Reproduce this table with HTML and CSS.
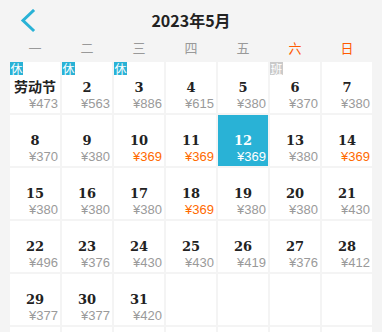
FILE: index.html
```html
<!DOCTYPE html>
<html lang="zh-CN">
<head>
<meta charset="utf-8">
<title>2023年5月</title>
<link rel="stylesheet" href="styles.css">
</head>
<body>
<div class="page">
  <header class="header">
    <div class="back">
      <svg width="16" height="24" viewBox="0 0 16 24"><polyline points="13,2 3,11.5 13,21" fill="none" stroke="#29b2d6" stroke-width="3" stroke-linecap="square"/></svg>
    </div>
    <div class="title">2023年5月</div>
    <div></div>
  </header>
  <div class="weekdays">
    <span>一</span><span>二</span><span>三</span><span>四</span><span>五</span><span class="we">六</span><span class="we">日</span>
  </div>
  <div class="grid">
    <div class="cell"><span class="badge rest">休</span><span class="num holiday">劳动节</span><span class="price">¥473</span></div>
    <div class="cell"><span class="badge rest">休</span><span class="num">2</span><span class="price">¥563</span></div>
    <div class="cell"><span class="badge rest">休</span><span class="num">3</span><span class="price">¥886</span></div>
    <div class="cell"><span class="num">4</span><span class="price">¥615</span></div>
    <div class="cell"><span class="num">5</span><span class="price">¥380</span></div>
    <div class="cell"><span class="badge work">班</span><span class="num">6</span><span class="price">¥370</span></div>
    <div class="cell"><span class="num">7</span><span class="price">¥380</span></div>

    <div class="cell"><span class="num">8</span><span class="price">¥370</span></div>
    <div class="cell"><span class="num">9</span><span class="price">¥380</span></div>
    <div class="cell"><span class="num">10</span><span class="price low">¥369</span></div>
    <div class="cell"><span class="num">11</span><span class="price low">¥369</span></div>
    <div class="cell selected"><span class="num">12</span><span class="price">¥369</span></div>
    <div class="cell"><span class="num">13</span><span class="price">¥380</span></div>
    <div class="cell"><span class="num">14</span><span class="price low">¥369</span></div>

    <div class="cell"><span class="num">15</span><span class="price">¥380</span></div>
    <div class="cell"><span class="num">16</span><span class="price">¥380</span></div>
    <div class="cell"><span class="num">17</span><span class="price">¥380</span></div>
    <div class="cell"><span class="num">18</span><span class="price low">¥369</span></div>
    <div class="cell"><span class="num">19</span><span class="price">¥380</span></div>
    <div class="cell"><span class="num">20</span><span class="price">¥380</span></div>
    <div class="cell"><span class="num">21</span><span class="price">¥430</span></div>

    <div class="cell"><span class="num">22</span><span class="price">¥496</span></div>
    <div class="cell"><span class="num">23</span><span class="price">¥376</span></div>
    <div class="cell"><span class="num">24</span><span class="price">¥430</span></div>
    <div class="cell"><span class="num">25</span><span class="price">¥430</span></div>
    <div class="cell"><span class="num">26</span><span class="price">¥419</span></div>
    <div class="cell"><span class="num">27</span><span class="price">¥376</span></div>
    <div class="cell"><span class="num">28</span><span class="price">¥412</span></div>

    <div class="cell"><span class="num">29</span><span class="price">¥377</span></div>
    <div class="cell"><span class="num">30</span><span class="price">¥377</span></div>
    <div class="cell"><span class="num">31</span><span class="price">¥420</span></div>
    <div class="cell"></div>
    <div class="cell"></div>
    <div class="cell"></div>
    <div class="cell"></div>

    <div class="cell"></div>
    <div class="cell"></div>
    <div class="cell"></div>
    <div class="cell"></div>
    <div class="cell"></div>
    <div class="cell"></div>
    <div class="cell"></div>
  </div>
</div>
</body>
</html>
```
FILE: styles.css
```css
html, body {
  margin: 0;
  padding: 0;
  background: #f4f4f4;
}
body {
  font-family: "Noto Sans CJK SC", "Noto Sans", sans-serif;
  color: #333;
  overflow: hidden;
}
.page {
  width: 382px;
  height: 332px;
  overflow: hidden;
}
.header {
  height: 40px;
  display: grid;
  grid-template-columns: 1fr auto 1fr;
  align-items: center;
}
.back {
  padding-left: 20px;
  display: flex;
  align-items: center;
  padding-top: 2px;
}
.back svg {
  display: block;
}
.title {
  font-size: 16px;
  font-weight: bold;
  color: #222;
  line-height: 20px;
}
.weekdays {
  display: grid;
  grid-template-columns: repeat(7, 50px);
  column-gap: 2px;
  padding: 0 10px;
  height: 16px;
  line-height: 16px;
  margin-bottom: 6px;
  font-size: 13px;
  color: #999;
  text-align: center;
}
.weekdays .we {
  color: #ff5a00;
}
.grid {
  display: grid;
  grid-template-columns: repeat(7, 50px);
  grid-auto-rows: 51px;
  gap: 2px;
  padding: 0 10px;
}
.cell {
  position: relative;
  background: #fff;
  display: flex;
  flex-direction: column;
  align-items: center;
  padding-top: 17px;
  box-sizing: border-box;
}
.badge {
  position: absolute;
  left: 0;
  top: 0;
  width: 13px;
  height: 13px;
  line-height: 13px;
  font-size: 12px;
  color: #fff;
  text-align: center;
}
.badge.rest {
  background: #29b2d6;
}
.badge.work {
  background: #cacaca;
}
.num {
  font-family: "DejaVu Serif", serif;
  font-weight: bold;
  font-size: 13px;
  line-height: 18px;
  height: 18px;
  color: #222;
}
.num.holiday {
  font-family: "Noto Sans CJK SC", sans-serif;
  font-size: 14px;
  line-height: 15px;
  color: #222;
}
.price {
  align-self: stretch;
  text-align: right;
  padding-right: 2px;
  font-family: "Liberation Sans", sans-serif;
  font-size: 13px;
  line-height: 14px;
  color: #9a9a9a;
}
.price.low {
  color: #ff6a00;
}
.cell.selected {
  background: #29b2d6;
}
.cell.selected .num,
.cell.selected .price {
  color: #fff;
}
```
